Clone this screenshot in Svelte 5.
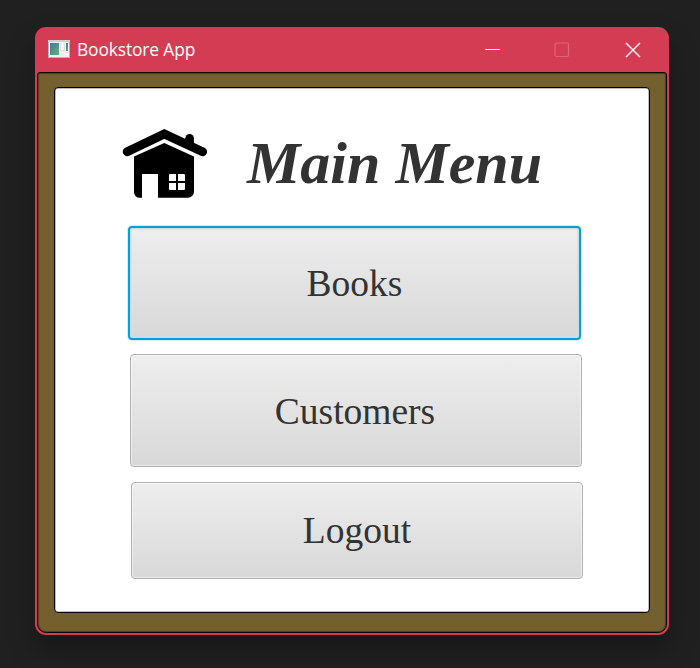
<script>
  const items = [
    { label: 'Books', kind: 'books' },
    { label: 'Customers', kind: 'customers' },
    { label: 'Logout', kind: 'logout' }
  ];
</script>

<div class="desktop">
  <div class="window">
    <header>
      <svg class="appicon" width="22" height="18" viewBox="0 0 22 18">
        <defs>
          <linearGradient id="pic" x1="0" y1="0" x2="1" y2="1">
            <stop offset="0" stop-color="#4774a0" />
            <stop offset="1" stop-color="#5bb578" />
          </linearGradient>
        </defs>
        <rect x="0" y="0" width="22" height="18" fill="#b9b3b6" />
        <rect x="1" y="1" width="20" height="16" fill="#f1f1f1" />
        <rect x="0" y="0" width="22" height="2" fill="#d4ced1" />
        <rect x="2" y="3" width="9" height="12" fill="url(#pic)" />
        <rect x="12" y="3" width="5" height="8" fill="#dedfe1" />
        <rect x="13" y="3" width="3" height="7" fill="#f4f4f4" />
        <rect x="18" y="3" width="2" height="8" fill="url(#pic)" />
      </svg>
      <span class="caption">Bookstore App</span>
      <div class="controls">
        <svg width="16" height="16" viewBox="0 0 16 16"><path d="M0 7.5H15" stroke="#fff" /></svg>
        <svg width="16" height="16" viewBox="0 0 16 16"><rect x="1" y="1" width="13.5" height="13.5" rx="1.5" fill="none" stroke="#e0647a" stroke-width="1.2" /></svg>
        <svg class="close" width="16" height="16" viewBox="0 0 16 16"><path d="M1 1L15 15M15 1L1 15" stroke="#fff" stroke-width="1.4" /></svg>
      </div>
    </header>
    <main>
      <section>
        <div class="heading">
          <svg width="87" height="72" viewBox="0 0 87 72">
            <path d="M63.3 18V10.2a4.3 4.3 0 0 1 8.6 0V21Z" />
            <path d="M5.2 23.7L42.3 6L80.6 23.7" fill="none" stroke="#000" stroke-width="8.9" stroke-linecap="round" />
            <path fill-rule="evenodd" d="M42.3 15L72 28.4V64a6 6 0 0 1-6 5.8H36V46H20V69.8H17.5a5.5 5.5 0 0 1-5.5-5.5V28.4ZM48 46h6v7h-7v-6a1 1 0 0 1 1-1ZM56 46h6a1 1 0 0 1 1 1v6h-7ZM47 55h7v7h-6a1 1 0 0 1-1-1ZM56 55h7v6a1 1 0 0 1-1 1h-6Z" />
          </svg>
          <h1>Main Menu</h1>
        </div>
        <nav>
          {#each items as item}
            <button class={item.kind}>{item.label}</button>
          {/each}
        </nav>
      </section>
    </main>
  </div>
</div>

<style>
  :global(body) {
    margin: 0;
    background: #1e1e1e;
  }
  .desktop {
    box-sizing: border-box;
    width: 700px;
    height: 668px;
    padding: 27px 31px 33px 35px;
    background: #202020;
    overflow: hidden;
  }
  .window {
    box-sizing: border-box;
    width: 634px;
    height: 608px;
    padding: 0 2px 2px;
    display: flex;
    flex-direction: column;
    background: #d43c54;
    border-radius: 11px;
    box-shadow: 0 14px 28px rgba(0, 0, 0, 0.28);
  }
  header {
    box-sizing: border-box;
    height: 45px;
    flex: none;
    display: flex;
    align-items: center;
    padding: 0 26px 1px 11px;
  }
  .appicon {
    margin-right: 7px;
  }
  .caption {
    color: #fff;
    font: 17.4px/24px "Open Sans", sans-serif;
    letter-spacing: -0.13px;
    white-space: nowrap;
  }
  .controls {
    margin-left: auto;
    padding-top: 2px;
    display: flex;
    gap: 53px;
  }
  .close {
    margin-left: 2px;
  }
  main {
    box-sizing: border-box;
    flex: 1;
    display: flex;
    padding: 14px 16px 19px;
    background: #73602e;
    border: 1px solid #090804;
    border-radius: 3px 3px 9px 9px;
    box-shadow: inset 0 0 1px 1px rgba(0, 0, 0, 0.35);
  }
  section {
    box-sizing: border-box;
    flex: 1;
    border: 1px solid #000;
    border-radius: 4px;
    background: #fff;
    box-shadow: inset 0 0 0 0.5px rgba(0, 0, 0, 0.5);
    padding: 40px 0 0 67px;
  }
  .heading {
    height: 72px;
    display: flex;
    align-items: center;
  }
  h1 {
    margin: 0 0 2px 38px;
    font: italic bold 60px/68px "Liberation Serif", serif;
    color: #333;
    white-space: nowrap;
  }
  nav {
    display: flex;
    flex-direction: column;
    align-items: flex-start;
    gap: 14px;
    padding: 26px 0 0 6px;
  }
  button {
    box-sizing: border-box;
    display: flex;
    align-items: center;
    justify-content: center;
    width: 452px;
    height: 113px;
    padding: 2px 0 0;
    font: 37.5px/44px "Liberation Serif", serif;
    color: #333;
    background: linear-gradient(#eee, #d8d8d8);
    border: 1px solid #b0b0b0;
    border-radius: 4px;
    box-shadow: inset 0 0 0 1px rgba(255, 255, 255, 0.5);
  }
  .books {
    width: 453px;
    height: 114px;
    border: 2px solid #0b9dd7;
    box-shadow: 0 0 0 1px #d3edf7, inset 0 0 0 1.5px #c6dfe6;
  }
  .customers {
    margin-left: 2px;
    padding-right: 2px;
  }
  .logout {
    margin: 1px 0 0 3px;
    height: 97px;
    padding: 1px 0 0;
  }
</style>
